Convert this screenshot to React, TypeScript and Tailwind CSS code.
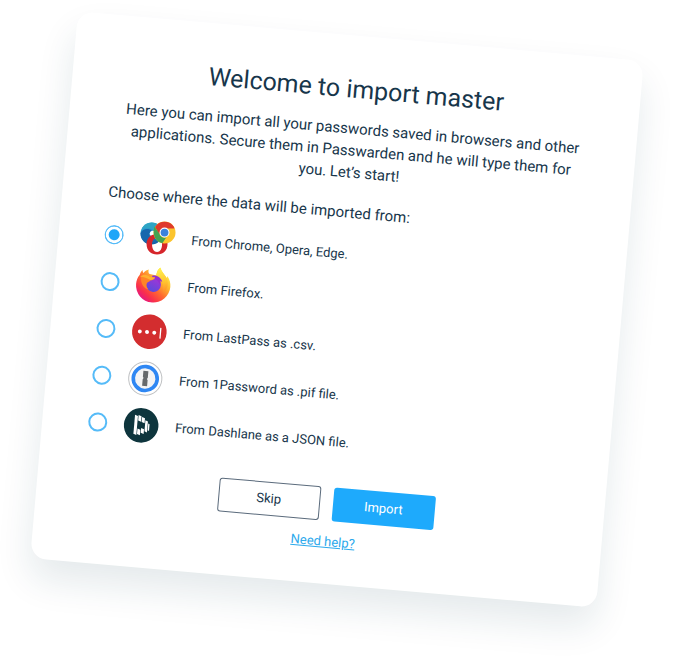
import React from 'react';

const sources = [
  { id: 'browsers', label: 'From Chrome, Opera, Edge.', icon: BrowsersIcon },
  { id: 'firefox', label: 'From Firefox.', icon: FirefoxIcon },
  { id: 'lastpass', label: 'From LastPass as .csv.', icon: LastPassIcon },
  { id: 'onepassword', label: 'From 1Password as .pif file.', icon: OnePasswordIcon },
  { id: 'dashlane', label: 'From Dashlane as a JSON file.', icon: DashlaneIcon },
];

function BrowsersIcon() {
  return (
    <svg viewBox="0 0 36 36" className="w-9 h-9" aria-hidden="true">
      <defs>
        <linearGradient id="edge" x1="0.2" y1="0" x2="0.6" y2="1">
          <stop offset="0" stopColor="#36b3d3" />
          <stop offset="0.5" stopColor="#1e87c5" />
          <stop offset="1" stopColor="#1560a6" />
        </linearGradient>
      </defs>
      <g transform="rotate(-5 18 18)">
        {/* Edge */}
        <circle cx="12" cy="13.500" r="11" fill="url(#edge)" />
        <path d="M2.500 8C6 2.500 13 0.500 19 4.500L17 12C12 8 6 7 2.500 8Z" fill="#2fa5c4" />
        <path d="M1 13C3 8.500 9 8 12 10.500C9 12 9 17 12.500 20L10 24.300C4.500 23.500 1 19 1 13Z" fill="#1667ad" />
        <path d="M10.500 12.500C11.500 10 15.500 10 16 13C15.800 15.500 13 16.500 11.300 15.600C10 14.800 9.900 13.600 10.500 12.500Z" fill="#fff" />
        {/* Opera */}
        <path fillRule="evenodd" d="M17.500 14C23.500 14 28 18 28 24C28 30.500 23.500 34.500 17.500 34.500C11.500 34.500 7 30.500 7 24C7 18 11.500 14 17.500 14ZM17.500 18C14.500 18 12.500 20.500 12.500 24.500C12.500 29 14.500 32 17.500 32C20.500 32 22.500 29 22.500 24.500C22.500 20.500 20.500 18 17.500 18Z" fill="#d6252b" />
        {/* Chrome */}
        <circle cx="25" cy="12.500" r="11" fill="#fbc42e" />
        <path d="M15.500 7A11 11 0 0 1 34.500 7L34.800 8.500H25L19.500 14Z" fill="#df3a2c" />
        <path d="M15 6.500L20 14A5.500 5.500 0 0 0 26.500 17.600L22.800 23.200A11 11 0 0 1 14.200 14C14 11 14.200 9 15 6.500Z" fill="#45a352" />
        <circle cx="25" cy="12.500" r="5" fill="#fff" />
        <circle cx="25" cy="12.500" r="3.900" fill="#3c82dc" />
      </g>
    </svg>
  );
}

function FirefoxIcon() {
  return (
    <svg viewBox="0 0 36 36" className="w-9 h-9" aria-hidden="true">
      <defs>
        <linearGradient id="fox" x1="0.85" y1="0.1" x2="0.2" y2="0.95">
          <stop offset="0" stopColor="#fff04a" />
          <stop offset="0.3" stopColor="#ffb52e" />
          <stop offset="0.55" stopColor="#ff6a2f" />
          <stop offset="0.8" stopColor="#f9304c" />
          <stop offset="1" stopColor="#e31587" />
        </linearGradient>
        <linearGradient id="globe" x1="0.7" y1="0" x2="0.3" y2="1">
          <stop offset="0" stopColor="#a633d6" />
          <stop offset="1" stopColor="#584bdc" />
        </linearGradient>
        <linearGradient id="flame" x1="0.5" y1="0" x2="0.6" y2="1">
          <stop offset="0" stopColor="#fff350" />
          <stop offset="0.6" stopColor="#ffc22f" />
          <stop offset="1" stopColor="#ff8a2a" />
        </linearGradient>
      </defs>
      <path d="M3.500 9C4 6.500 5 5 6 4C6 5.500 6.500 6.500 7 7C8.500 4.500 10.500 3.500 12 3C11.500 5 12 7 13.500 7.500L20 8.500C20 4.500 21.500 1.500 23.500 0C24.500 4 28 6 30.500 10C31 9.500 31 9 31 8C34 11.500 35 15 35 18.500A17.200 17.200 0 0 1 0.600 18.500C0.600 15 1.500 11.500 3.500 9Z" fill="url(#fox)" />
      <path d="M20 8.500C20 4.500 21.500 1.500 23.500 0C24.500 4 28 6 30.500 10C33 15 33 21 28 25C29 18 27 12 20 8.500Z" fill="url(#flame)" />
      <circle cx="18" cy="17.500" r="7.500" fill="url(#globe)" />
      <path d="M16 9C20 7.500 25 10 26.500 14L24 13.500C24.500 15 24.500 16 24 17C22.500 13 20 11.500 16 11.500Z" fill="#9330cf" />
      <path d="M5 11C8 8.500 11.500 9 14 10.500H19C18.500 12.500 16.500 13.500 14.500 14C14 15.500 12.500 15.700 11.500 16.300C10.500 18 11 21 13.500 23C9 22.500 5 18.500 5 11Z" fill="#ff8427" />
      <path d="M4 11C8 7 12 9 14 10.500H19C18.500 12.300 16.500 13 14.500 13.500C11 11.500 8 11 4 11Z" fill="#ffb02e" />
    </svg>
  );
}

function LastPassIcon() {
  return (
    <svg viewBox="0 0 36 36" className="w-9 h-9" aria-hidden="true">
      <circle cx="18" cy="18" r="17.300" fill="#d32d2f" />
      <circle cx="8.500" cy="18.500" r="2" fill="#fff" />
      <circle cx="15.700" cy="18.500" r="2" fill="#fff" />
      <circle cx="23" cy="18.500" r="2" fill="#fff" />
      <rect x="28.500" y="13" width="1.300" height="11" rx="0.600" fill="#fff" />
    </svg>
  );
}

function OnePasswordIcon() {
  return (
    <svg viewBox="0 0 36 36" className="w-9 h-9" aria-hidden="true">
      <circle cx="18" cy="18" r="16.600" fill="#fff" stroke="#bfc1c3" strokeWidth="1" />
      <circle cx="18" cy="18" r="12" fill="#f3f3f4" stroke="#2f87f3" strokeWidth="3.600" />
      <path d="M15.500 10.500H20.500V17L19.700 18.300L20.500 19.500V25.500H15.500V19L16.300 17.700L15.500 16.500Z" fill="#66696c" />
    </svg>
  );
}

function DashlaneIcon() {
  return (
    <svg viewBox="0 0 36 36" className="w-9 h-9" aria-hidden="true">
      <circle cx="18" cy="18" r="17.300" fill="#0e353d" />
      <g fill="#fff">
        <path d="M11 8L14 9V28L11 27Z" />
        <path d="M14.600 8L17.600 9V14.500L14.600 13.500Z" />
        <path d="M18.200 9.500L21.200 10.500V15.500L18.200 14.500Z" />
        <path d="M21.800 12.500L24.400 13.500V24.500L21.800 23.500Z" />
        <path d="M24.900 15.500L26.300 16.200V23L24.900 22.300Z" />
        <path d="M18.200 20.500L21.200 21.500V26.500L18.200 25.500Z" />
        <path d="M14.600 21.500L17.600 22.500V28L14.600 27Z" />
      </g>
    </svg>
  );
}

function App() {
  const [selected, setSelected] = React.useState('browsers');

  return (
    <main className="px-[53px] pt-[35px] pb-18 bg-white overflow-hidden font-['Roboto',sans-serif] text-[#17364b]">
      <form
        className="rotate-5 rounded-2xl bg-white px-[46px] pt-9 pb-8 shadow-[0_20px_36px_rgba(20,60,85,0.11)]"
        onSubmit={(e) => e.preventDefault()}
      >
        <h1 className="text-center text-[25px] leading-9">Welcome to import master</h1>
        <p className="mt-[10px] px-1 text-center text-[15px] leading-[22px]">
          Here you can import all your passwords saved in browsers and other
          applications. Secure them in Passwarden and he will type them for{' '}
          <span className="whitespace-nowrap">you. Let’s start!</span>
        </p>

        <fieldset className="mt-[17px]">
          <legend className="text-[15px] leading-6">Choose where the data will be imported from:</legend>
          <div className="flex flex-col gap-[11px] pt-3">
            {sources.map(({ id, label, icon: Icon }) => (
              <label key={id} className="flex items-center cursor-pointer">
                <input
                  type="radio"
                  name="source"
                  value={id}
                  checked={selected === id}
                  onChange={() => setSelected(id)}
                  className="appearance-none w-[19px] h-[19px] shrink-0 rounded-full border-2 border-[#55bbf8] checked:border checked:bg-[#20a6f8] checked:shadow-[inset_0_0_0_3px_white]"
                />
                <span className="ml-4">
                  <Icon />
                </span>
                <span className="ml-4 text-[13px]">{label}</span>
              </label>
            ))}
          </div>
        </fieldset>

        <div className="mt-[27px] pl-3 flex flex-col items-center">
          <div className="flex gap-[13px]">
            <button type="button" className="w-[102px] h-[34px] rounded-[3px] border border-[#5b6b7c] text-[13px]">
              Skip
            </button>
            <button type="submit" className="w-[102px] h-[34px] rounded-[3px] bg-[#1eaafc] text-white text-[13px]">
              Import
            </button>
          </div>
          <a href="#help" className="mt-[11px] text-[13px] leading-5 text-[#2ba9ec] underline">
            Need help?
          </a>
        </div>
      </form>
    </main>
  );
}

export default App;
